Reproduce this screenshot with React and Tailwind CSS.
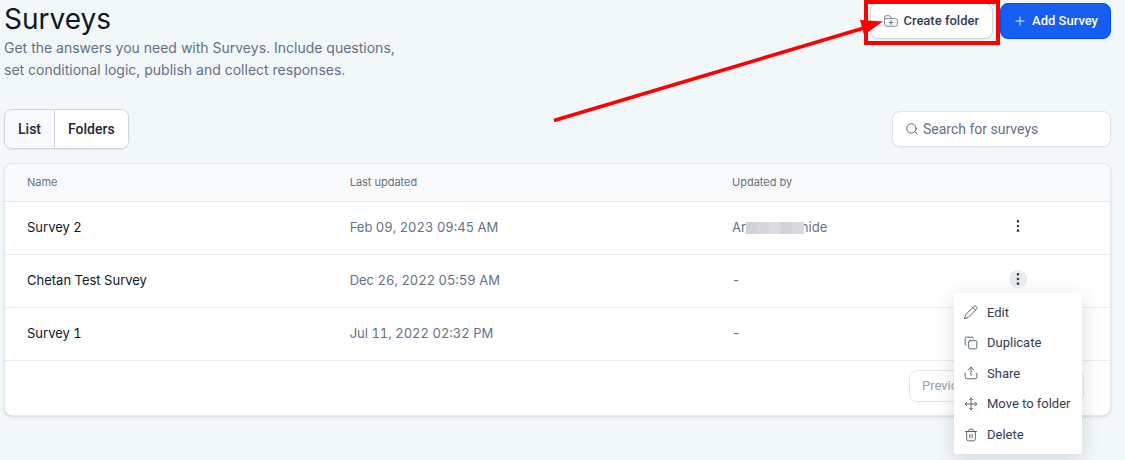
import React, { useState } from 'react';
import { Search, Plus, Copy, Move, MoreVertical } from 'lucide-react';

const surveys = [
    { id: 1, name: 'Survey 2', updated: 'Feb 09, 2023 09:45 AM', by: 'masked' },
    { id: 2, name: 'Chetan Test Survey', updated: 'Dec 26, 2022 05:59 AM', by: '-' },
    { id: 3, name: 'Survey 1', updated: 'Jul 11, 2022 02:32 PM', by: '-' },
];

// Shared wrapper for the hand drawn 24px line icons
const LineIcon = ({ className, children }) => (
    <svg
        viewBox="0 0 24 24"
        fill="none"
        stroke="currentColor"
        strokeWidth="1.5"
        strokeLinecap="round"
        strokeLinejoin="round"
        className={className}
        aria-hidden="true"
    >
        {children}
    </svg>
);

const FolderPlusIcon = ({ className }) => (
    <LineIcon className={className}>
        <path d="M1 8V6a3 3 0 0 1 3-3h5a2 2 0 0 1 1.800 1.100L13 8" />
        <path d="M1 8h18.500a3.500 3.500 0 0 1 3.500 3.500v6a3.500 3.500 0 0 1-3.500 3.500h-15A3.500 3.500 0 0 1 1 17.500z" />
        <path d="M12 11.500v6M9 14.500h6" strokeWidth="2" />
    </LineIcon>
);

const PencilIcon = ({ className }) => (
    <LineIcon className={className}>
        <path d="M1 23l2-6.500L17.500 2a2 2 0 0 1 2.800 0l1.700 1.700a2 2 0 0 1 0 2.800L7.500 21z" />
        <path d="M15 4.500l4.500 4.500" />
    </LineIcon>
);

const ShareIcon = ({ className }) => (
    <LineIcon className={className}>
        <path d="M2 12.500V18a4 4 0 0 0 4 4h12a4 4 0 0 0 4-4v-5.500" />
        <path d="M12 16V2M7.500 6.500L12 2l4.500 4.500" />
    </LineIcon>
);

const TrashIcon = ({ className }) => (
    <LineIcon className={className}>
        <path d="M2.500 6h19M8 6V4.500A2.500 2.500 0 0 1 10.500 2h3A2.500 2.500 0 0 1 16 4.500V6" />
        <path d="M4.500 6v12.500A3.500 3.500 0 0 0 8 22h8a3.500 3.500 0 0 0 3.500-3.500V6M10 11v6M14 11v6" />
    </LineIcon>
);

const CopyIcon = ({ className }) => <Copy className={className} strokeWidth={1.5} />;
const MoveIcon = ({ className }) => <Move className={className} strokeWidth={1.5} />;

const menuItems = [
    { label: 'Edit', icon: PencilIcon },
    { label: 'Duplicate', icon: CopyIcon },
    { label: 'Share', icon: ShareIcon },
    { label: 'Move to folder', icon: MoveIcon },
    { label: 'Delete', icon: TrashIcon },
];

// Name with the middle part pixelated
const MaskedName = () => (
    <span className="flex items-center">
        Ar
        <span className="relative z-10 flex h-3 w-[58px]">
            <span className="flex-1 bg-[#cfd2d8]" />
            <span className="flex-1 bg-[#d5d7dc]" />
            <span className="flex-1 bg-[#dadce1]" />
            <span className="flex-1 bg-[#cfd2d7]" />
            <span className="flex-1 bg-[#d9dade]" />
        </span>
        <span className="-ml-[3px]">hide</span>
    </span>
);

const RowMenu = () => (
    <div
        role="menu"
        className="absolute left-1/2 top-full z-20 mt-[5px] flex h-[161px] w-32 -translate-x-1/2 flex-col rounded-[3px] bg-white py-1 shadow-[0_4px_20px_rgba(0,0,0,0.14)]"
    >
        {menuItems.map(({ label, icon: Icon }) => (
            <button
                key={label}
                role="menuitem"
                className="flex flex-1 items-center gap-[9px] pl-[10px] text-left font-[Roboto,sans-serif] text-[13px] text-[#344054] hover:bg-gray-50"
            >
                <Icon className="h-[14px] w-[14px] text-[#475467]" />
                {label}
            </button>
        ))}
    </div>
);

export default function App() {
    const [view, setView] = useState('List');
    const [openMenu, setOpenMenu] = useState(2);

    return (
        <div className="min-h-screen bg-[#f2f7fa] pb-11 pl-1 pr-[14px] pt-px font-[Inter,sans-serif]">
            {/* Page header */}
            <header className="flex items-start justify-between">
                <div>
                    <h1 className="text-[28px] leading-9 text-[#101828]">Surveys</h1>
                    <p className="max-w-[410px] text-[14px] leading-[22px] text-[#667085]">
                        Get the answers you need with Surveys. Include questions, set conditional logic,
                        publish and collect responses.
                    </p>
                </div>

                <div className="mt-[2px] flex gap-[7px] font-[Roboto,sans-serif] text-[13px] font-medium">
                    <div className="relative">
                        <button className="flex h-9 items-center gap-[5px] rounded-lg border border-[#d0d5dd] bg-white px-[13px] text-[#344054] shadow-xs">
                            <FolderPlusIcon className="h-[14px] w-[14px] text-[#667085]" />
                            Create folder
                        </button>
                        {/* Callout box and arrow */}
                        <div className="pointer-events-none absolute -bottom-[6px] -left-[6px] -right-[7px] -top-[3px] z-10 border-4 border-[#ff0000]" />
                        <svg
                            viewBox="0 0 332 108"
                            className="pointer-events-none absolute right-[109px] top-[13px] z-20 h-[108px] w-[332px]"
                            aria-hidden="true"
                        >
                            <path d="M2 104.500L312 12" stroke="#ff0000" strokeWidth="3.500" />
                            <path d="M308 4L331 5.500L312 19z" fill="#ff0000" />
                        </svg>
                    </div>
                    <button className="flex h-9 items-center gap-[5px] rounded-lg border border-[#004eeb] bg-[#155eef] px-3 text-white shadow-xs">
                        <Plus className="h-[14px] w-[14px]" strokeWidth={1.5} />
                        Add Survey
                    </button>
                </div>
            </header>

            {/* View toggle and search */}
            <div className="mt-7 flex items-center justify-between font-[Roboto,sans-serif]">
                <div className="flex h-10 overflow-hidden rounded-lg border border-[#d0d5dd] shadow-xs">
                    {['List', 'Folders'].map((tab) => (
                        <button
                            key={tab}
                            onClick={() => setView(tab)}
                            className={`px-[13px] text-[14px] font-medium text-[#1d2939] not-first:border-l not-first:border-[#d0d5dd] ${view === tab ? 'bg-[#f9fafb]' : 'bg-white'
                                }`}
                        >
                            {tab}
                        </button>
                    ))}
                </div>
                <label className="flex h-9 w-[219px] items-center gap-1 rounded-lg border border-[#e0e3e8] bg-white pl-3 shadow-xs">
                    <Search className="h-[14px] w-[14px] shrink-0 text-[#475467]" strokeWidth={1.5} />
                    <input
                        type="text"
                        aria-label="Search for surveys"
                        placeholder="Search for surveys"
                        className="w-full min-w-0 bg-transparent text-[14px] outline-none placeholder:text-[#667085]"
                    />
                </label>
            </div>

            {/* Surveys table */}
            <div className="mt-[14px] rounded-lg border border-[#e4e7ec] bg-white shadow-sm">
                <table className="w-full table-fixed border-separate border-spacing-0 text-left text-[13px] tabular-nums">
                    <thead>
                        <tr className="h-[38px] text-[11px] text-[#667085] [&>th]:border-b [&>th]:border-[#e4e7ec] [&>th]:bg-[#f9fafb] [&>th]:px-[22px] [&>th]:font-normal">
                            <th className="w-[29.2%] rounded-tl-lg">Name</th>
                            <th className="w-[34.6%]">Last updated</th>
                            <th>Updated by</th>
                            <th className="w-[184px] rounded-tr-lg" aria-label="Actions" />
                        </tr>
                    </thead>
                    <tbody>
                        {surveys.map((survey) => (
                            <tr
                                key={survey.id}
                                className="h-[53px] text-[#667085] [&>td]:border-b [&>td]:border-[#eaecf0] [&>td]:px-[22px]"
                            >
                                <td className="text-[#101828]">{survey.name}</td>
                                <td>{survey.updated}</td>
                                <td>{survey.by === 'masked' ? <MaskedName /> : survey.by}</td>
                                <td>
                                    <div className="relative mx-auto mb-1 w-[18px]">
                                        <button
                                            aria-label={`Actions for ${survey.name}`}
                                            onClick={() => setOpenMenu(openMenu === survey.id ? null : survey.id)}
                                            className={`flex h-[18px] w-[18px] items-center justify-center rounded-full text-[#344054] ${openMenu === survey.id ? 'bg-[#e9ebec]' : ''
                                                }`}
                                        >
                                            <MoreVertical className="h-4 w-4 shrink-0" />
                                        </button>
                                        {openMenu === survey.id && <RowMenu />}
                                    </div>
                                </td>
                            </tr>
                        ))}
                    </tbody>
                </table>

                {/* Pagination */}
                <div className="flex justify-end pb-[13px] pr-[26px] pt-[9px] font-[Roboto,sans-serif] text-[13px] text-[#98a2b3]">
                    <div className="flex h-8 w-[175px] rounded-lg border border-[#e4e7ec]">
                        <button className="flex-1 border-r border-[#e4e7ec] px-3 text-left" disabled>
                            Previous
                        </button>
                        <button className="flex-1 px-3" disabled>
                            Next
                        </button>
                    </div>
                </div>
            </div>
        </div>
    );
}
